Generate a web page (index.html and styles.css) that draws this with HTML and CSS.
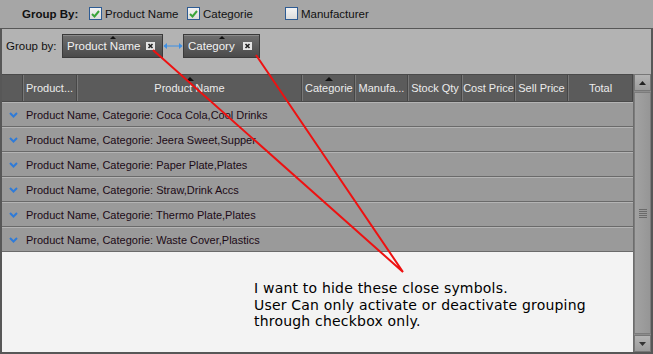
FILE: index.html
```html
<!DOCTYPE html>
<html lang="en">
<head>
    <meta charset="UTF-8">
    <meta name="viewport" content="width=device-width, initial-scale=1.0">
    <title>Grouping Grid</title>
    <link rel="stylesheet" href="styles.css">
</head>
<body>
    <div class="window">
        <div class="topbar">
            <span class="topbar-label">Group By:</span>
            <label class="check check-product">
                <span class="box checked"><svg width="9" height="8" viewBox="0 0 9 8"><path d="M1 4 L3.5 6.5 L8 1" fill="none" stroke="#3aa43a" stroke-width="2"/></svg></span>
                Product Name
            </label>
            <label class="check check-category">
                <span class="box checked"><svg width="9" height="8" viewBox="0 0 9 8"><path d="M1 4 L3.5 6.5 L8 1" fill="none" stroke="#3aa43a" stroke-width="2"/></svg></span>
                Categorie
            </label>
            <label class="check check-maker">
                <span class="box"></span>
                Manufacturer
            </label>
        </div>

        <div class="frame">
            <div class="group-panel">
                <span class="group-label">Group by:</span>
                <div class="chip chip-product">
                    <span class="chip-sort"></span>
                    <span class="chip-text">Product Name</span>
                    <span class="chip-close"><svg width="9" height="8" viewBox="0 0 9 8"><rect width="9" height="8" fill="#e4e4e4"/><path d="M2.5 2 L6.5 6 M6.5 2 L2.5 6" stroke="#222" stroke-width="1.6"/></svg></span>
                </div>
                <svg class="link-arrow" width="20" height="8" viewBox="0 0 20 8"><path d="M1 4 H19" stroke="#3d8fe4" stroke-width="1"/><path d="M0.5 4 L4 1 L4 7 Z M19.5 4 L16 1 L16 7 Z" fill="#3d8fe4"/></svg>
                <div class="chip chip-category">
                    <span class="chip-sort"></span>
                    <span class="chip-text">Category</span>
                    <span class="chip-close"><svg width="9" height="8" viewBox="0 0 9 8"><rect width="9" height="8" fill="#e4e4e4"/><path d="M2.5 2 L6.5 6 M6.5 2 L2.5 6" stroke="#222" stroke-width="1.6"/></svg></span>
                </div>
            </div>

            <div class="grid-area">
                <div class="grid">
                    <div class="header-row">
                        <div class="hcell w-indent"></div>
                        <div class="hcell w-prodshort left">Product...</div>
                        <div class="hcell w-prodname sorted">Product Name</div>
                        <div class="hcell w-cat sorted left">Categorie</div>
                        <div class="hcell w-small">Manufa...</div>
                        <div class="hcell w-stock">Stock Qty</div>
                        <div class="hcell w-small">Cost Price</div>
                        <div class="hcell w-small">Sell Price</div>
                        <div class="hcell w-total">Total</div>
                    </div>

                    <div class="group-row"><span class="expander"><svg width="9" height="6" viewBox="0 0 9 6"><path d="M1 1 L4.5 4.5 L8 1" fill="none" stroke="#2f7bd8" stroke-width="2"/></svg></span><span class="group-text">Product Name, Categorie: Coca Cola,Cool Drinks</span></div>
                    <div class="group-row"><span class="expander"><svg width="9" height="6" viewBox="0 0 9 6"><path d="M1 1 L4.5 4.5 L8 1" fill="none" stroke="#2f7bd8" stroke-width="2"/></svg></span><span class="group-text">Product Name, Categorie: Jeera Sweet,Supper</span></div>
                    <div class="group-row"><span class="expander"><svg width="9" height="6" viewBox="0 0 9 6"><path d="M1 1 L4.5 4.5 L8 1" fill="none" stroke="#2f7bd8" stroke-width="2"/></svg></span><span class="group-text">Product Name, Categorie: Paper Plate,Plates</span></div>
                    <div class="group-row"><span class="expander"><svg width="9" height="6" viewBox="0 0 9 6"><path d="M1 1 L4.5 4.5 L8 1" fill="none" stroke="#2f7bd8" stroke-width="2"/></svg></span><span class="group-text">Product Name, Categorie: Straw,Drink Accs</span></div>
                    <div class="group-row"><span class="expander"><svg width="9" height="6" viewBox="0 0 9 6"><path d="M1 1 L4.5 4.5 L8 1" fill="none" stroke="#2f7bd8" stroke-width="2"/></svg></span><span class="group-text">Product Name, Categorie: Thermo Plate,Plates</span></div>
                    <div class="group-row"><span class="expander"><svg width="9" height="6" viewBox="0 0 9 6"><path d="M1 1 L4.5 4.5 L8 1" fill="none" stroke="#2f7bd8" stroke-width="2"/></svg></span><span class="group-text">Product Name, Categorie: Waste Cover,Plastics</span></div>

                    <div class="empty-area">
                        <p class="note">I want to hide these close symbols.<br>User Can only activate or deactivate grouping<br>through checkbox only.</p>
                    </div>
                </div>

                <div class="scrollbar">
                    <div class="scroll-btn"><svg width="7" height="4" viewBox="0 0 7 4"><path d="M0 4 L3.5 0 L7 4 Z" fill="#222"/></svg></div>
                    <div class="scroll-thumb">
                        <span class="grip"></span>
                    </div>
                    <div class="scroll-btn"><svg width="7" height="4" viewBox="0 0 7 4"><path d="M0 0 L3.5 4 L7 0 Z" fill="#333"/></svg></div>
                </div>
            </div>
        </div>

        <svg class="callout" width="653" height="354" viewBox="0 0 653 354">
            <path d="M153 50 L403 272 L256 55" fill="none" stroke="#ee1111" stroke-width="2"/>
        </svg>
    </div>
</body>
</html>
```

FILE: styles.css
```css
* {
    margin: 0;
    padding: 0;
    box-sizing: border-box;
}

body {
    font-family: 'Liberation Sans', Arial, sans-serif;
    background-color: #a6a6a6;
    width: 653px;
    height: 354px;
    overflow: hidden;
}

.window {
    position: relative;
    width: 653px;
    height: 354px;
    display: flex;
    flex-direction: column;
}

/* top checkbox bar */
.topbar {
    height: 28px;
    display: flex;
    align-items: center;
    padding-bottom: 1px;
    font-size: 11.5px;
    color: #111;
    background-color: #a6a6a6;
}

.topbar-label {
    font-weight: bold;
    margin-left: 22px;
    width: 67px;
}

.check {
    display: flex;
    align-items: center;
    gap: 3px;
}

.check-product { width: 98px; }
.check-category { width: 98px; }

.box {
    width: 13px;
    height: 13px;
    background: linear-gradient(#f4f4f4, #dcdcdc);
    border: 1px solid #2d5b93;
    display: flex;
    align-items: center;
    justify-content: center;
}

/* bordered frame */
.frame {
    flex: 1;
    display: flex;
    flex-direction: column;
    border: 2px solid #575757;
    border-top-width: 1px;
    min-height: 0;
}

.group-panel {
    height: 45px;
    background-color: #b3b3b3;
    display: flex;
    align-items: flex-start;
    padding: 5px 0 0 4px;
    font-size: 11.5px;
    color: #111;
}

.group-label {
    width: 56px;
    line-height: 24px;
}

.chip {
    position: relative;
    height: 24px;
    display: flex;
    align-items: center;
    color: #f2f2f2;
    font-size: 11.5px;
    background: linear-gradient(#6f6f6f, #4a4a4a);
    border: 1px solid #3a3a3a;
    box-shadow: inset 0 1px 0 #8a8a8a;
    padding-left: 4px;
}

.chip-product { width: 101px; }
.chip-category { width: 77px; }

.chip-text {
    flex: 1;
    white-space: nowrap;
}

.chip-close {
    display: flex;
    margin: 0 7px 0 4px;
}

.chip-sort {
    position: absolute;
    top: 1px;
    left: 50%;
    margin-left: -3px;
    border-left: 3px solid transparent;
    border-right: 3px solid transparent;
    border-bottom: 3px solid #111;
}

.link-arrow {
    display: block;
    margin-top: 8px;
}

/* grid */
.grid-area {
    flex: 1;
    display: flex;
    min-height: 0;
}

.grid {
    flex: 1;
    display: flex;
    flex-direction: column;
}

.header-row {
    height: 28px;
    display: flex;
    background-color: #5b5b5b;
    border-top: 1px solid #4a4a4a;
    border-bottom: 1px solid #4a4a4a;
}

.hcell {
    position: relative;
    display: flex;
    align-items: center;
    justify-content: center;
    color: #ececec;
    font-size: 11px;
    border-left: 1px solid #787878;
    border-right: 1px solid #474747;
    white-space: nowrap;
    overflow: hidden;
}

.hcell.left {
    justify-content: flex-start;
    padding-left: 2px;
}

.hcell.sorted::before {
    content: "";
    position: absolute;
    top: 2px;
    left: 50%;
    margin-left: -4px;
    border-left: 4px solid transparent;
    border-right: 4px solid transparent;
    border-bottom: 4px solid #111;
}

.w-indent { width: 21px; border-left: none; }
.w-prodshort { width: 54px; }
.w-prodname { width: 225px; }
.w-cat { width: 53px; }
.w-small { width: 53px; }
.w-stock { width: 54px; }
.w-total { width: 65px; }

.group-row {
    height: 25px;
    display: flex;
    align-items: center;
    background-color: #9a9a9a;
    border-top: 1px solid #b4b4b4;
    border-bottom: 1px solid #6a6a6a;
    font-size: 11px;
    color: #1c0a16;
}

.expander {
    width: 24px;
    display: flex;
    justify-content: center;
    padding-right: 2px;
}

.empty-area {
    flex: 1;
    background-color: #f3f3f3;
    padding: 28px 0 0 252px;
}

.note {
    font-family: 'DejaVu Sans', sans-serif;
    font-size: 14px;
    letter-spacing: 0.2px;
    line-height: 16.5px;
    color: #000;
}

/* scrollbar */
.scrollbar {
    width: 18px;
    display: flex;
    flex-direction: column;
    background-color: #8c8c8c;
    border-left: 1px solid #6d6d6d;
}

.scroll-btn {
    height: 17px;
    display: flex;
    align-items: center;
    justify-content: center;
    background: linear-gradient(#b4b4b4, #9c9c9c);
    border: 1px solid #777;
}

.scroll-thumb {
    flex: 1;
    display: flex;
    align-items: center;
    justify-content: center;
    background: linear-gradient(90deg, #a2a2a2, #969696);
    border: 1px solid #7c7c7c;
    margin: 1px 0;
}

.grip {
    width: 8px;
    height: 9px;
    background: repeating-linear-gradient(#6a6a6a 0 1px, transparent 1px 2px);
}

/* red annotation lines drawn over the screenshot */
.callout {
    position: absolute;
    top: 0;
    left: 0;
    pointer-events: none;
}
```
